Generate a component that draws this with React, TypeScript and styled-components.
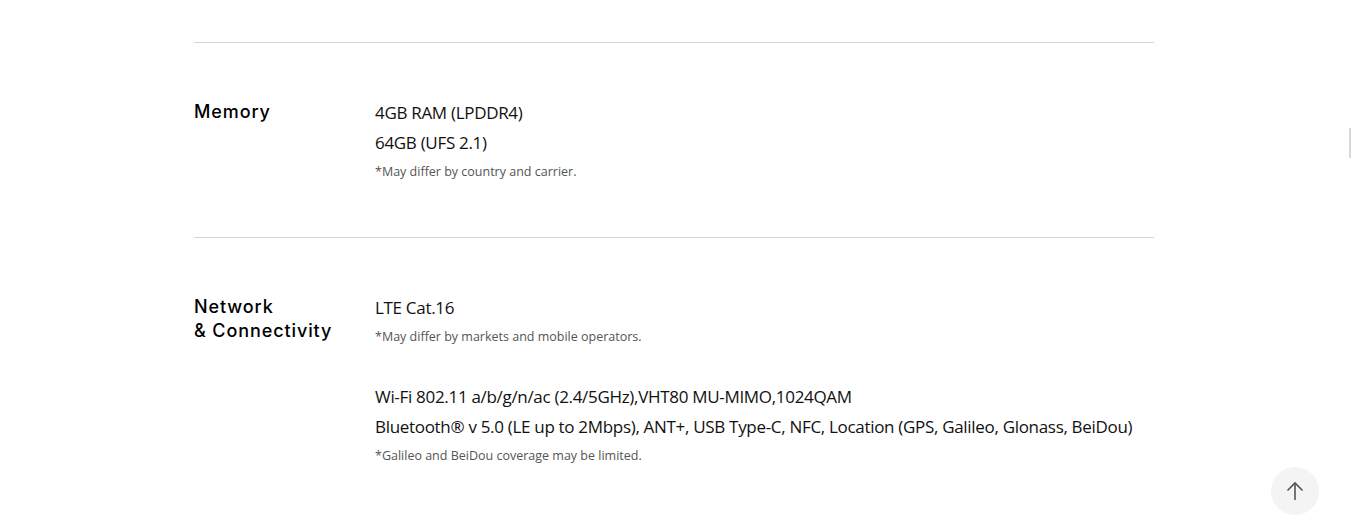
import React from "react";
import styled, { createGlobalStyle } from "styled-components";

const Global = createGlobalStyle`
  html, body { margin: 0; padding: 0; background: #fff; }
  body { font-family: "Open Sans", "Liberation Sans", sans-serif; color: #000; }
`;

const Page = styled.div`
  width: 1352px;
  height: 521px;
  overflow: hidden;
  position: relative;
  background: #fff;
`;

const Container = styled.div`
  width: 960px;
  margin: 0 0 0 194px;
  padding-top: 42px;
`;

const Section = styled.section`
  display: grid;
  grid-template-columns: 181px 1fr;
  border-top: 1px solid #d6d6d6;
  padding: 57px 0 51px;
`;

const Label = styled.h3`
  margin: 0;
  font-family: "Inter", "Noto Sans", sans-serif;
  font-weight: 500;
  font-size: 18px;
  line-height: 24px;
  letter-spacing: 0.9px;
  color: #000;
`;

const Values = styled.div`
  display: flex;
  flex-direction: column;
  margin-top: -2px;
`;

const Group = styled.div<{ $gap?: number }>`
  margin-top: ${(p) => p.$gap ?? 0}px;
`;

const Value = styled.p`
  margin: 0;
  font-family: "Open Sans", "Liberation Sans", sans-serif;
  font-size: 17px;
  line-height: 30px;
  letter-spacing: -0.31px;
  color: #111;
`;

const Note = styled.p`
  margin: 0;
  font-family: "Open Sans", "Liberation Sans", sans-serif;
  font-size: 12.5px;
  line-height: 28px;
  letter-spacing: 0;
  color: #555;
`;

const TopButton = styled.button`
  position: absolute;
  left: 1271px;
  top: 467px;
  width: 48px;
  height: 48px;
  border-radius: 50%;
  border: none;
  background: #f4f4f4;
  display: flex;
  align-items: center;
  justify-content: center;
  padding: 0;
`;

const ScrollMark = styled.div`
  position: absolute;
  left: 1349px;
  top: 128px;
  width: 2px;
  height: 30px;
  background: #d8d8d8;
`;

export default function App() {
  return (
    <Page>
      <Global />
      <Container>
        <Section>
          <Label>Memory</Label>
          <Values>
            <Value>4GB RAM (LPDDR4)</Value>
            <Value>64GB (UFS 2.1)</Value>
            <Note>*May differ by country and carrier.</Note>
          </Values>
        </Section>
        <Section>
          <Label>
            Network
            <br />& Connectivity
          </Label>
          <Values>
            <Group>
              <Value>LTE Cat.16</Value>
              <Note>*May differ by markets and mobile operators.</Note>
            </Group>
            <Group $gap={31}>
              <Value>Wi-Fi 802.11 a/b/g/n/ac (2.4/5GHz),VHT80 MU-MIMO,1024QAM</Value>
              <Value>
                Bluetooth® v 5.0 (LE up to 2Mbps), ANT+, USB Type-C, NFC, Location (GPS, Galileo, Glonass, BeiDou)
              </Value>
              <Note>*Galileo and BeiDou coverage may be limited.</Note>
            </Group>
          </Values>
        </Section>
      </Container>
      <ScrollMark />
      <TopButton aria-label="Back to top">
        <svg width="20" height="20" viewBox="0 0 20 20" fill="none" stroke="#555" strokeWidth="1.6">
          <path d="M10 19V2" />
          <path d="M2.5 9.5L10 2l7.5 7.5" />
        </svg>
      </TopButton>
    </Page>
  );
}
